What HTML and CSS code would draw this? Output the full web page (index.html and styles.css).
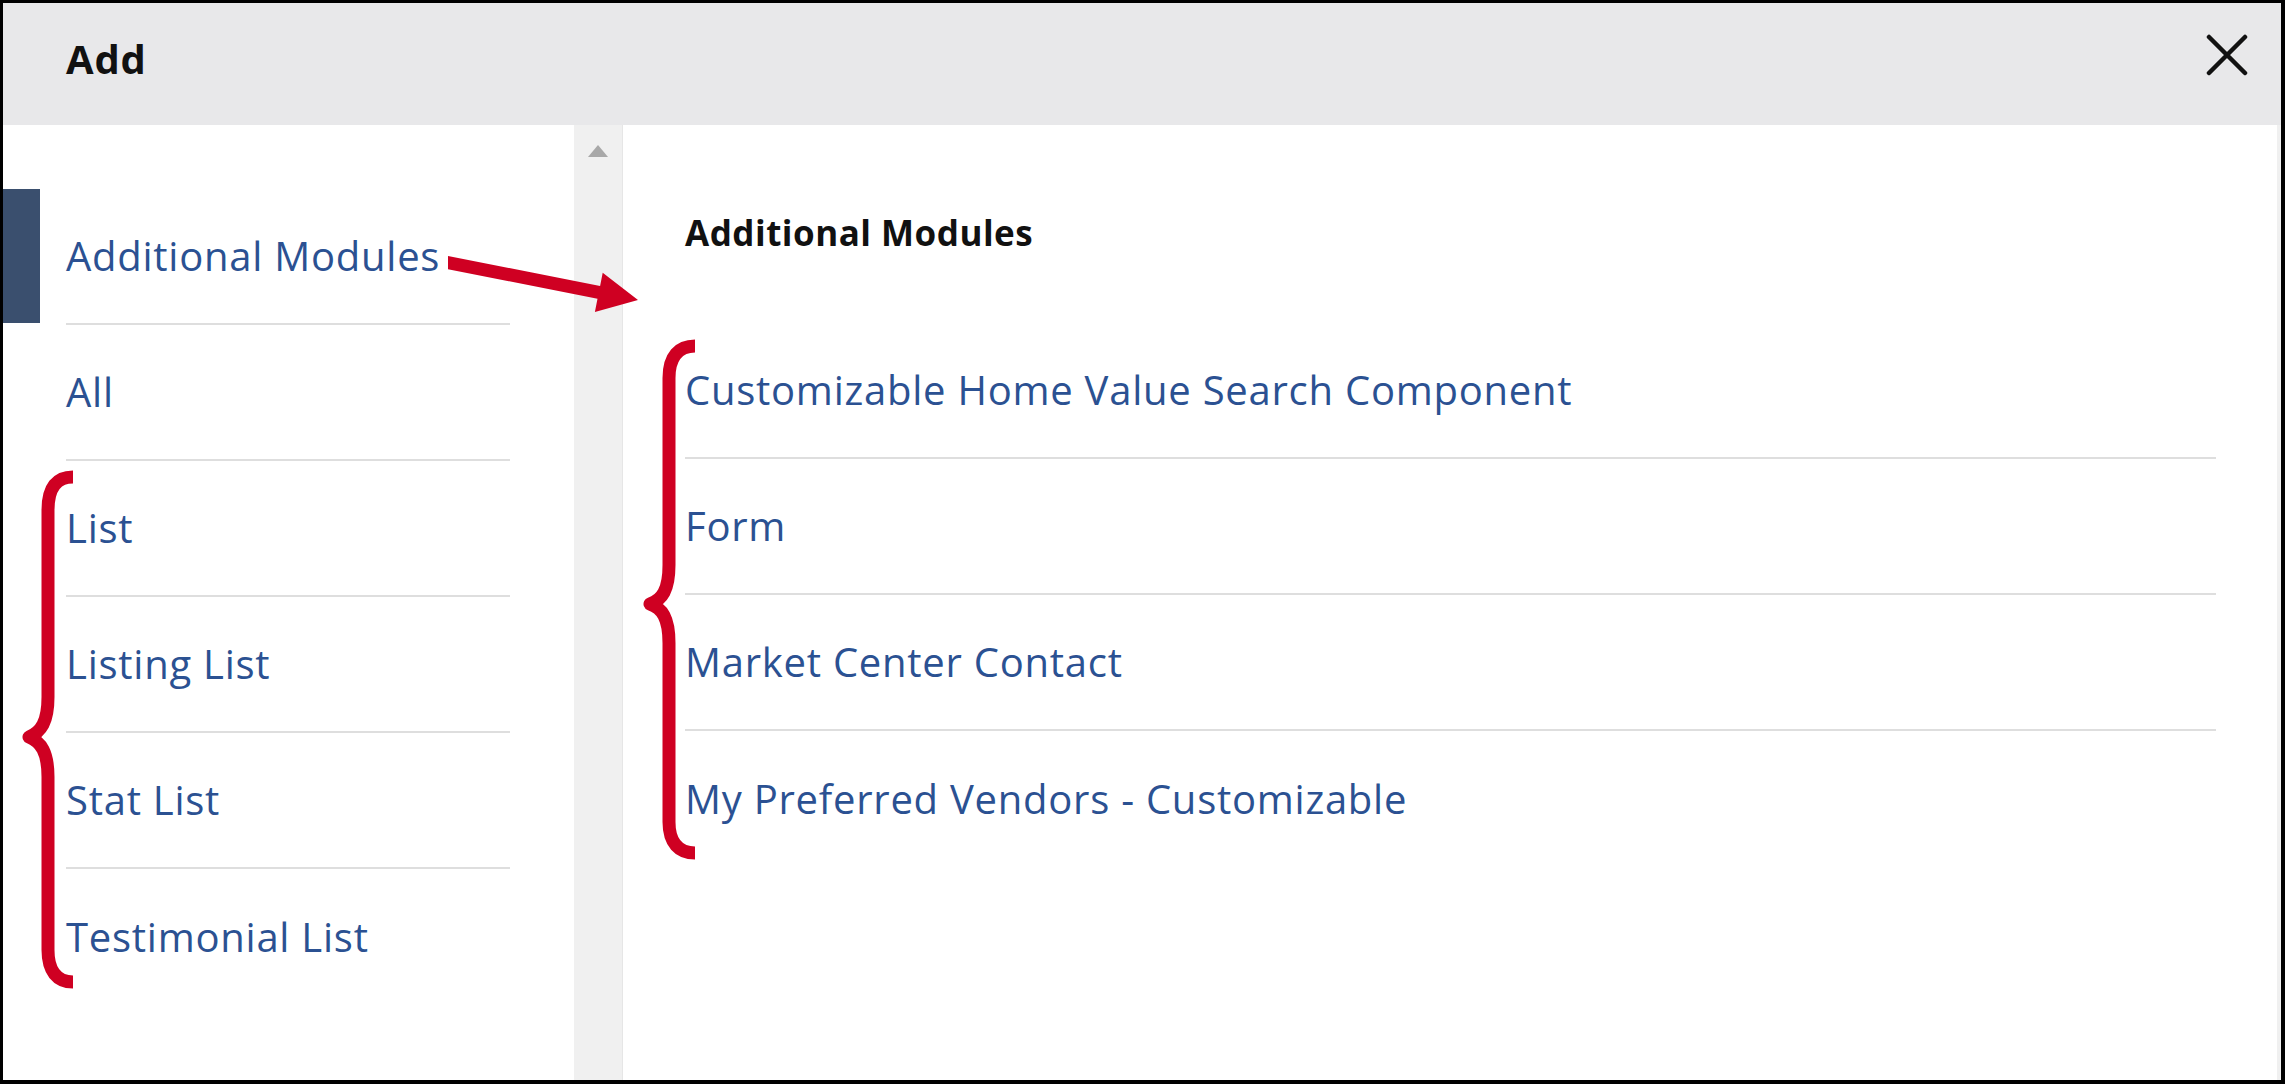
FILE: index.html
```html
<!DOCTYPE html>
<html lang="en">
<head>
<meta charset="utf-8">
<title>Add</title>
<link rel="stylesheet" href="styles.css">
</head>
<body>
<div class="modal">
  <header class="modal-header">
    <h1 class="modal-title">Add</h1>
    <button class="close-btn" type="button" aria-label="Close">
      <svg width="42" height="42" viewBox="0 0 42 42"><path d="M3 3 L39 39 M39 3 L3 39" stroke="#111" stroke-width="4.5" stroke-linecap="round" fill="none"/></svg>
    </button>
  </header>
  <div class="modal-body">
    <nav class="sidebar">
      <ul class="nav-list">
        <li class="nav-item active"><span class="marker"></span><a class="nav-label">Additional Modules</a></li>
        <li class="nav-item"><span class="marker"></span><a class="nav-label">All</a></li>
        <li class="nav-item"><span class="marker"></span><a class="nav-label">List</a></li>
        <li class="nav-item"><span class="marker"></span><a class="nav-label">Listing List</a></li>
        <li class="nav-item"><span class="marker"></span><a class="nav-label">Stat List</a></li>
        <li class="nav-item"><span class="marker"></span><a class="nav-label">Testimonial List</a></li>
      </ul>
    </nav>
    <div class="scroll-gutter"><span class="scroll-up"></span></div>
    <section class="content">
      <h2 class="section-title">Additional Modules</h2>
      <ul class="module-list">
        <li class="module-item"><a>Customizable Home Value Search Component</a></li>
        <li class="module-item"><a>Form</a></li>
        <li class="module-item"><a>Market Center Contact</a></li>
        <li class="module-item"><a>My Preferred Vendors - Customizable</a></li>
      </ul>
    </section>
  </div>
  <svg class="annotations" width="2285" height="1084" viewBox="0 0 2285 1084">
    <polygon points="448,256 600.1,285.9 602.7,272.7 638,300 594.9,311.9 597.5,298.7 448,269.3" fill="#cf0022"/>
    <path d="M73 477 C57 477 48 487 48 510 L48 697 C48 722 41 732 29 737 C41 742 48 752 48 777 L48 950 C48 971 57 982 73 982" fill="none" stroke="#cf0022" stroke-width="13" stroke-linejoin="round"/>
    <path d="M695 346 C679 346 669 356 669 378 L669 565 C669 590 662 600 650 604 C662 608 669 618 669 643 L669 822 C669 843 679 853 695 853" fill="none" stroke="#cf0022" stroke-width="13" stroke-linejoin="round"/>
  </svg>
</div>
</body>
</html>
```

FILE: styles.css
```css
html, body {
  margin: 0;
  padding: 0;
  background: #fff;
}

body {
  font-family: "Open Sans", "Noto Sans", "Liberation Sans", sans-serif;
}

.modal {
  position: relative;
  width: 2285px;
  height: 1084px;
  box-sizing: border-box;
  border-style: solid;
  border-color: #000;
  border-width: 3px 4px 4px 3px;
  display: flex;
  flex-direction: column;
  background: #fff;
  overflow: hidden;
}

.modal-header {
  flex: none;
  height: 122px;
  box-sizing: border-box;
  background: #e8e8ea;
  display: flex;
  justify-content: space-between;
  align-items: flex-start;
  padding: 31px 33px 0 63px;
}

.modal-title {
  margin: 5px 0 0;
  font-size: 40px;
  line-height: 40px;
  font-weight: 700;
  letter-spacing: 0.8px;
  color: #111;
}

.close-btn {
  border: none;
  background: none;
  padding: 0;
  margin: 0;
  width: 42px;
  height: 42px;
  cursor: pointer;
}

.close-btn svg {
  display: block;
}

.modal-body {
  flex: 1;
  display: flex;
  min-height: 0;
}

.sidebar {
  flex: none;
  width: 571px;
  padding-top: 64px;
  box-sizing: border-box;
}

.nav-list,
.module-list {
  list-style: none;
  margin: 0;
  padding: 0;
}

.nav-item {
  display: flex;
  align-items: flex-start;
}

.marker {
  flex: none;
  width: 37px;
  height: 134px;
}

.nav-item.active .marker {
  background: #3a4f6e;
}

.nav-label {
  margin-left: 26px;
  width: 444px;
  height: 136px;
  box-sizing: border-box;
  border-bottom: 2px solid #dedede;
  display: flex;
  align-items: center;
  font-size: 40px;
  line-height: 40px;
  letter-spacing: 0.75px;
  color: #2b5192;
  cursor: pointer;
}

.nav-item:last-child .nav-label {
  border-bottom: none;
}

.scroll-gutter {
  flex: none;
  width: 48px;
  background: #f0f0f0;
  border-right: 1px solid #e6e6e6;
  display: flex;
  flex-direction: column;
  align-items: center;
}

.scroll-up {
  margin-top: 20px;
  width: 0;
  height: 0;
  border-left: 10.5px solid transparent;
  border-right: 10.5px solid transparent;
  border-bottom: 12px solid #a8a8a8;
}

.content {
  flex: 1;
  padding: 90px 61px 0 62px;
  border-right: 4px solid #f0f0f0;
}

.section-title {
  margin: 0 0 73px;
  font-size: 35px;
  line-height: 35px;
  font-weight: 700;
  letter-spacing: 0.5px;
  color: #111;
}

.module-item {
  height: 136px;
  box-sizing: border-box;
  border-bottom: 2px solid #dedede;
  display: flex;
  align-items: center;
  font-size: 40px;
  line-height: 40px;
  letter-spacing: 0.75px;
  color: #2b5192;
}

.module-item:last-child {
  border-bottom: none;
}

.module-item a {
  cursor: pointer;
}

.annotations {
  position: absolute;
  left: -3px;
  top: -3px;
  pointer-events: none;
}
```
